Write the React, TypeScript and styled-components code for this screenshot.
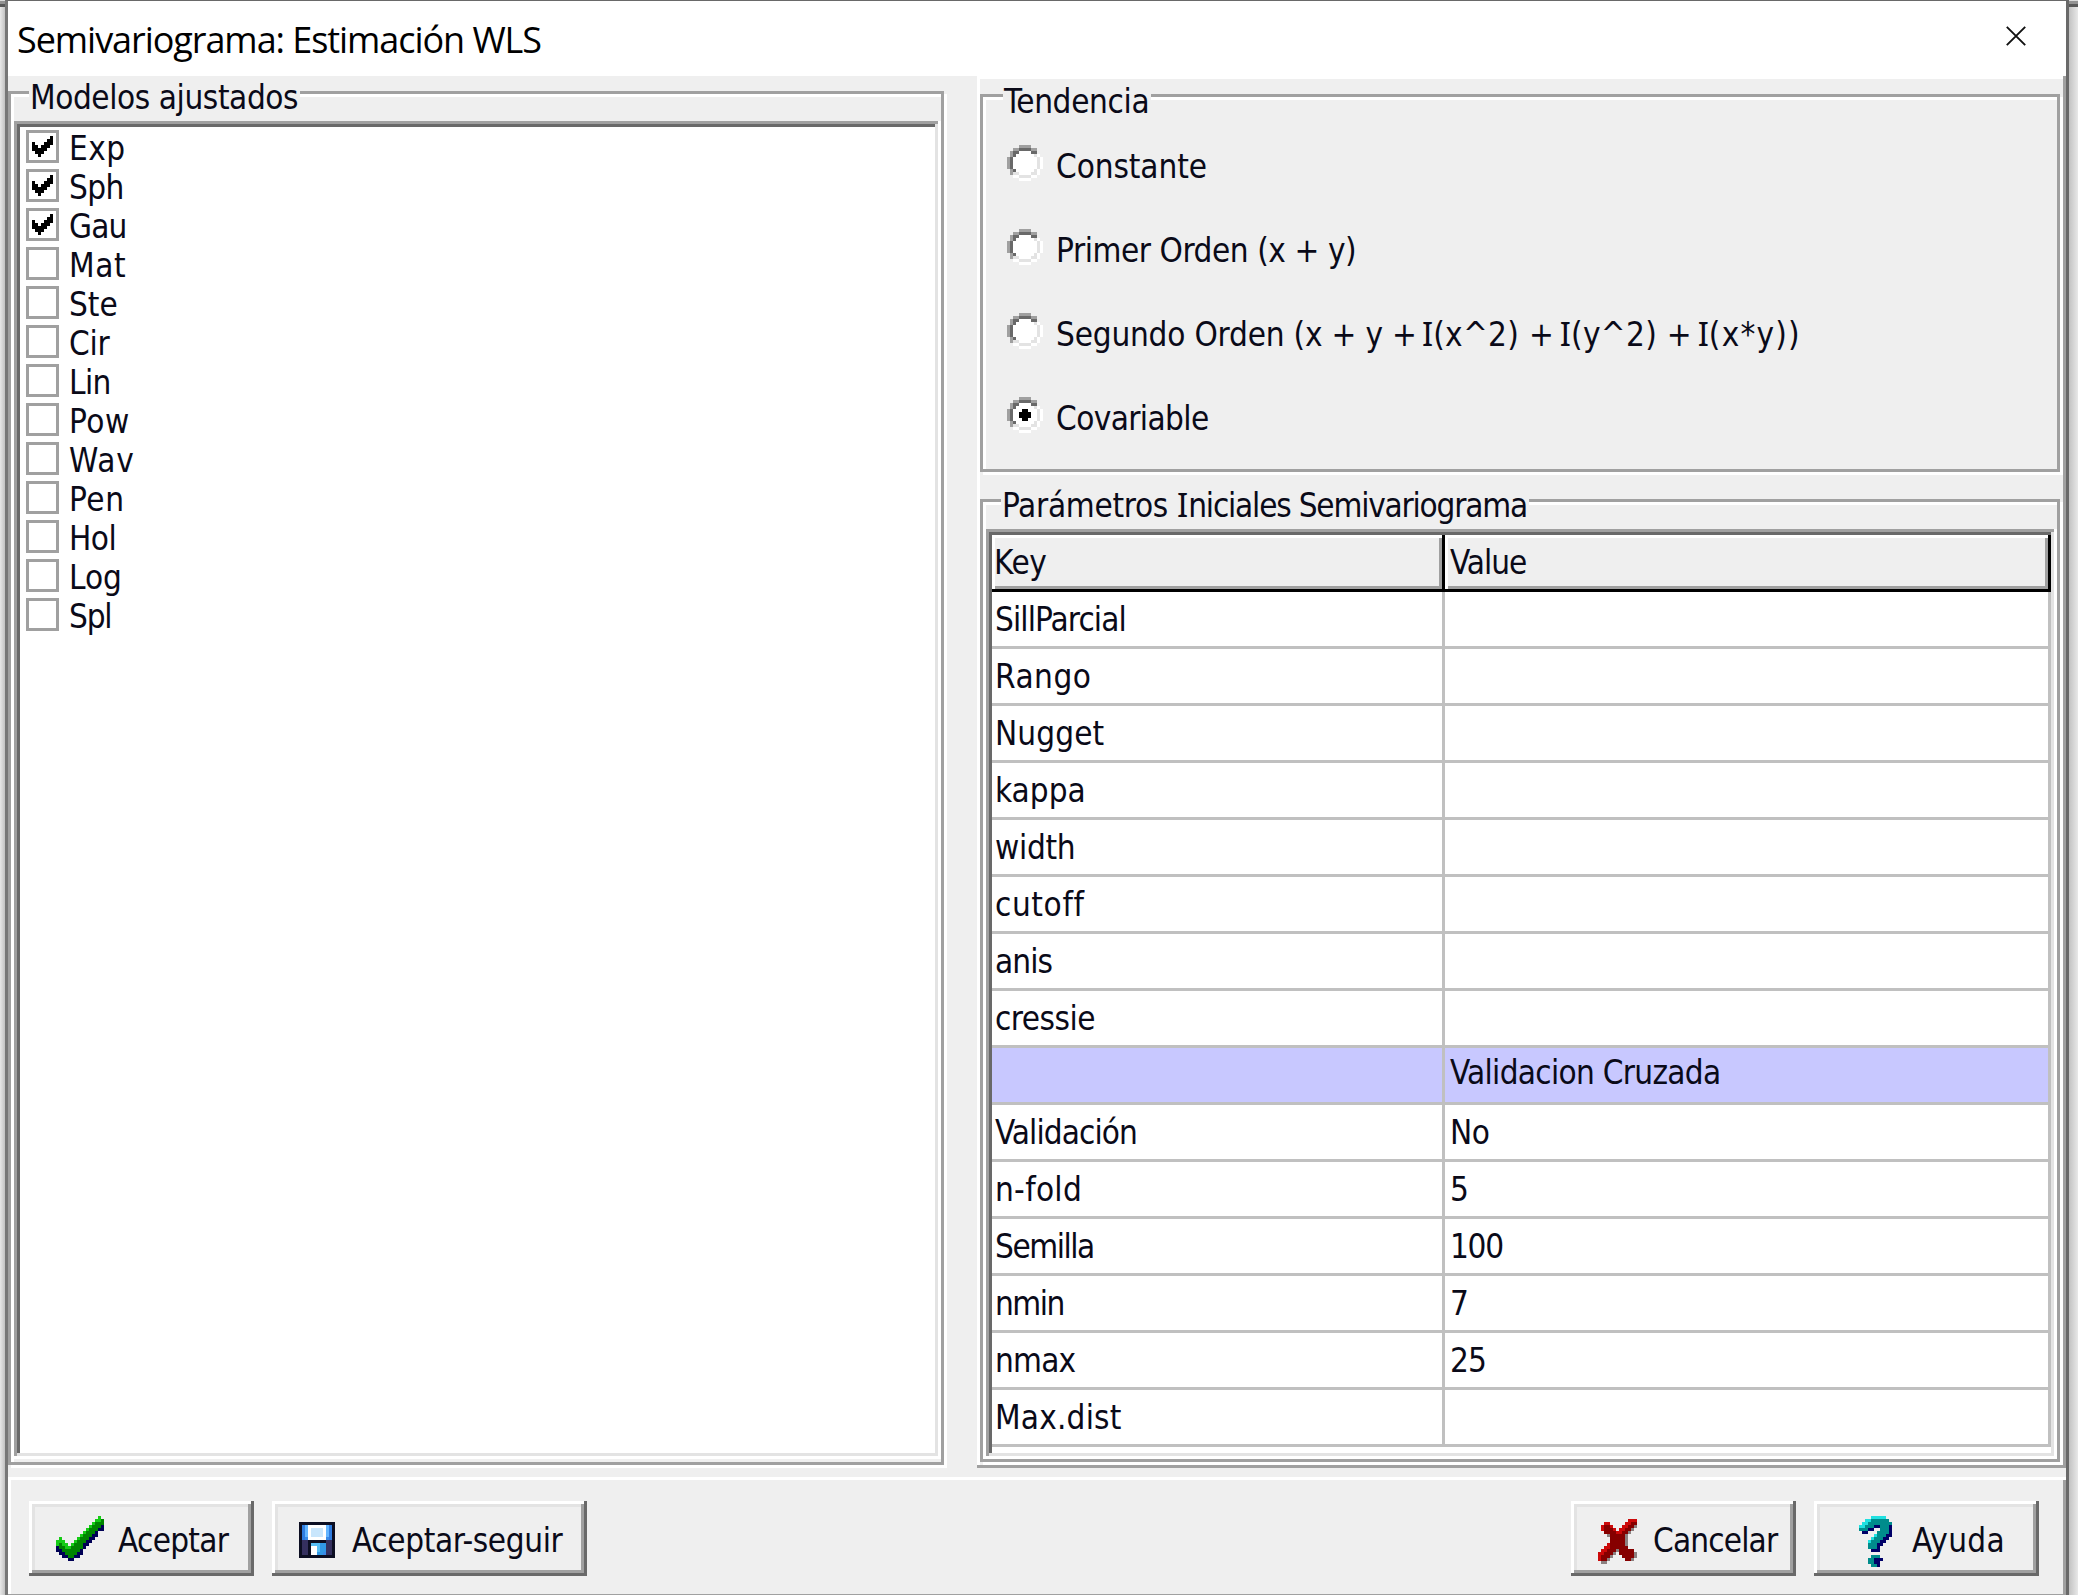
import React, { useState } from "react";
import styled, { createGlobalStyle, css } from "styled-components";

const face = "#efefef";
const light = "#ffffff";
const soft = "#e3e3e3";
const shadow = "#a0a0a0";
const dark = "#696969";
const line = "#c0c0c0";

const GlobalStyle = createGlobalStyle`
  * { box-sizing: border-box; }
  body { margin: 0; background: #e6e6e6; }
`;

const Desktop = styled.div`
  display: flex;
  width: 2078px;
  height: 1595px;
  overflow: hidden;
  font-family: "DejaVu Sans Condensed", "DejaVu Sans", sans-serif;
  font-size: 33px;
  color: #0a0a18;
`;

const Edge = styled.div<{ $side: "left" | "right" }>`
  flex: none;
  width: ${(p) => (p.$side === "left" ? 5 : 9)}px;
  background: linear-gradient(to ${(p) => p.$side}, #c2c2c2, #e8e8e8);
  &::before {
    content: "";
    display: block;
    height: 7px;
    background: linear-gradient(#dcdcdc 1px, #929292 1px, #929292 4px, #585858 4px);
  }
`;

const Window = styled.section`
  flex: none;
  display: flex;
  flex-direction: column;
  width: 2064px;
  height: 1595px;
  border: solid ${dark};
  border-width: 1px 3px 0 3px;
  border-left-color: #777;
  background: ${face};
`;

const TitleBar = styled.header`
  flex: none;
  display: flex;
  justify-content: space-between;
  height: 75px;
  padding: 0 40px 0 9px;
  background: ${light};
  color: #000;
`;

const Title = styled.h1`
  margin: 0;
  font: 400 36px/77px "Open Sans", "Noto Sans", sans-serif;
  letter-spacing: -1.06px;
  white-space: nowrap;
`;

const CloseButton = styled.button`
  display: block;
  width: 20px;
  height: 20px;
  margin-top: 25px;
  padding: 0;
  border: 0;
  background: none;
  svg { display: block; }
`;

const Body = styled.main`
  flex: none;
  display: flex;
  height: 1401px;
`;

const LeftColumn = styled.div`
  display: flex;
  width: 936px;
  height: 1374px;
  margin-top: 15px;
`;

const RightColumn = styled.div`
  display: flex;
  flex-direction: column;
  gap: 27px;
  width: 1089px;
  height: 1392px;
  margin-left: 33px;
  padding: 18px 6px 6px 3px;
  box-shadow: inset -3px -3px 0 ${shadow}, inset 3px 3px 0 ${light};
`;

const Group = styled.section<{ $height?: number }>`
  display: flex;
  flex-direction: column;
  flex: ${(p) => (p.$height ? `0 0 ${p.$height}px` : "1")};
  min-width: 0;
  padding: 0 0 3px 3px;
  border: 3px solid ${shadow};
  box-shadow: inset 3px 3px 0 ${light}, 3px 3px 0 ${light};
`;

const GroupTitle = styled.div<{ $left: number; $track: number; $top?: number }>`
  flex: none;
  align-self: flex-start;
  height: 36px;
  margin: ${(p) => p.$top ?? -15}px 0 6px ${(p) => p.$left}px;
  padding: 0 2px 0 1px;
  background: ${face};
  line-height: 37px;
  letter-spacing: ${(p) => p.$track}px;
  white-space: pre;
`;

const Sunken = styled.div<{ $bottom?: number }>`
  flex: 1;
  padding: 6px;
  margin-bottom: ${(p) => p.$bottom ?? 0}px;
  background: ${light};
  box-shadow: inset -3px -3px 0 ${light}, inset 3px 3px 0 ${shadow},
    inset -6px -6px 0 ${soft}, inset 6px 6px 0 ${dark};
`;

const Text = styled.span<{ $track: number }>`
  letter-spacing: ${(p) => p.$track}px;
  white-space: pre;
`;

const SerifI = styled.span<{ $tight?: boolean }>`
  margin-left: ${(p) => (p.$tight ? -4 : 0)}px;
  font-family: "Noto Sans", sans-serif;
  letter-spacing: 0;
  line-height: 1;
`;

const CheckRow = styled.label`
  display: flex;
  align-items: flex-start;
  gap: 10px;
  height: 39px;
  padding: 3px 0 0 6px;
  line-height: 38px;
`;

const CheckBox = styled.span`
  flex: none;
  width: 33px;
  height: 33px;
  padding: 3px;
  border: 3px solid ${shadow};
  background: ${light};
  svg { display: block; }
`;

const RadioList = styled.div`
  display: flex;
  flex-direction: column;
  gap: 48px;
  padding: 20px 0 0 21px;
`;

const RadioRow = styled.label`
  display: flex;
  align-items: flex-start;
  gap: 13px;
  height: 36px;
  line-height: 43px;
  svg { flex: none; }
`;

const Grid = styled.div`
  display: grid;
  grid-template-columns: 453px 606px;
  grid-auto-rows: 57px;
`;

const HeaderCell = styled.div<{ $left: number }>`
  padding-left: ${(p) => p.$left}px;
  border: solid #000;
  border-width: 0 3px 3px 0;
  background: ${face};
  box-shadow: inset 3px 3px 0 ${light}, inset -3px -3px 0 ${shadow};
  line-height: 55px;
`;

const Cell = styled.div<{ $left: number; $section?: boolean }>`
  padding-left: ${(p) => p.$left}px;
  border: solid ${line};
  border-width: 0 3px 3px 0;
  line-height: 55px;
  ${(p) => p.$section && css`
    background: #c8c8ff;
    line-height: 49px;
  `}
`;

const Footer = styled.footer`
  flex: none;
  display: flex;
  gap: 18px;
  width: 2058px;
  height: 118px;
  padding: 24px 27px 0 21px;
  border-bottom: 1px solid ${shadow};
  box-shadow: inset 3px 3px 0 ${light}, inset -3px 0 0 ${shadow};
`;

const Spacer = styled.div`
  flex: 1;
`;

const Button = styled.button<{ $width: number; $pad: number; $gap: number }>`
  display: flex;
  align-items: flex-start;
  gap: ${(p) => p.$gap}px;
  width: ${(p) => p.$width}px;
  height: 75px;
  padding: 0 0 0 ${(p) => p.$pad}px;
  border: 0;
  background: ${face};
  box-shadow: inset -3px -3px 0 ${dark}, inset 3px 3px 0 ${light},
    inset -6px -6px 0 ${shadow}, inset 6px 6px 0 ${soft};
  color: inherit;
  font: inherit;
  line-height: 80px;
`;

const IconBox = styled.span<{ $top: number }>`
  flex: none;
  padding-top: ${(p) => p.$top}px;
  svg { display: block; }
`;

type Palette = Record<string, string>;

function Pixels({ rows, palette }: { rows: string[]; palette: Palette }) {
  const cols = Math.max(...rows.map((r) => r.length));
  return (
    <svg width={cols * 3} height={rows.length * 3} viewBox={`0 0 ${cols} ${rows.length}`} shapeRendering="crispEdges">
      {rows.flatMap((row, y) =>
        [...row].map((ch, x) =>
          palette[ch] ? <rect key={`${x}-${y}`} x={x} y={y} width={1} height={1} fill={palette[ch]} /> : null
        )
      )}
    </svg>
  );
}

const tick = [
  "......#",
  ".....##",
  "#...###",
  "##.###.",
  "#####..",
  ".###...",
  "..#....",
];

const radioOff = [
  "....SSSS....",
  "..SSDDDDSS..",
  ".SDDWWWWDD..",
  ".SDWWWWWWLH.",
  "SDWWWWWWWWLH",
  "SDWWWWWWWWLH",
  "SDWWWWWWWWLH",
  "SDWWWWWWWWLH",
  ".SDWWWWWWLH.",
  ".SLLWWWWLLH.",
  "..HHLLLLHH..",
  "....HHHH....",
];

const radioOn = radioOff.map((row, y) => {
  if (y === 4 || y === 7) return row.slice(0, 5) + "##" + row.slice(7);
  if (y === 5 || y === 6) return row.slice(0, 4) + "####" + row.slice(8);
  return row;
});

const radioPalette: Palette = { S: shadow, D: dark, W: "#fff", L: soft, H: "#fff", "#": "#000" };

const okIcon = [
  "..............g.",
  ".............ggG",
  "............gGGG",
  "...........gGGGN",
  "..........gGGGNN",
  ".........gGGGN..",
  "........gGGGNN..",
  ".g.....gGGGNN...",
  "ggg...gGGGNN....",
  "gGgg.gGGGNN.....",
  "NGGggGGGGN......",
  "NNGGGGGGN.......",
  ".NNGGGGNN.......",
  "..NNGGNN........",
  "....NN..........",
];
const okPalette: Palette = { g: "#16cc16", G: "#008400", N: "#000055" };

const saveIcon = [
  "KKKKKKKKKKKK",
  "KBbWWWWWWbBK",
  "KBbWLLLLWbBK",
  "KBbWLLLLWbBK",
  "KBbWLLLLWbBK",
  "KBcWWWWWWcBK",
  "KPPKKKKKKPPK",
  "KPPKTTTUUPPK",
  "KPPKWWTUUPPK",
  "KPPKWWTUUPPK",
  "KPPKWWUUcPPK",
  "KKKKKKKKKKKK",
];
const savePalette: Palette = {
  K: "#0c0e22", B: "#2f7ce0", b: "#62b4ff", c: "#3a8ae8", W: "#ffffff",
  L: "#c9e6fc", P: "#35305f", T: "#55bdf5", U: "#3198e6",
};

const cancelIcon = [
  "..........rrr",
  "..rr.....rrRR",
  ".rRRr...rrRRs",
  ".rRRRr.rrRRs.",
  "..RRRRrrRRs..",
  "...sRRRRRs...",
  "....RRRRRs...",
  "....RRRRRs...",
  "...rRRRRRs...",
  "..rrRRRRRR...",
  ".rrRRRsRRRRR.",
  "rrRRRs.RRRRRs",
  "rRRRs...RRRRs",
  "rRRs.....RRs.",
  ".ss..........",
];
const cancelPalette: Palette = { r: "#cc0a0a", R: "#860000", s: "#8c8080" };

const helpIcon = [
  "....ccccc..",
  "..ccTTTTTT.",
  ".ccTTTTTTTT",
  "ccTTTNNTTTN",
  "TTTNN..TTTN",
  ".NN...TTTTN",
  ".....cTTTNN",
  "....cTTTNN.",
  "...cTTTNN..",
  "...TTTNN...",
  "...TTTN....",
  "....NNN....",
  "...........",
  "....TTT....",
  "...TTNNN...",
  "...TTNN....",
  "....TTN....",
];
const helpPalette: Palette = { c: "#20e0e0", T: "#008c8c", N: "#000068" };

const models: [string, number][] = [
  ["Exp", 0.5], ["Sph", -0.6], ["Gau", -0.85], ["Mat", 0.6], ["Ste", 0],
  ["Cir", -0.3], ["Lin", -0.6], ["Pow", 0.56], ["Wav", 0.9], ["Pen", 0.6],
  ["Hol", -0.5], ["Log", -0.06], ["Spl", -1.2],
];

type Param = { name: string; track: number; value?: string; valueTrack?: number; section?: boolean };
const params: Param[] = [
  { name: "SillParcial", track: -0.9 },
  { name: "Rango", track: 0.5 },
  { name: "Nugget", track: 0.1 },
  { name: "kappa", track: 0 },
  { name: "width", track: -0.3 },
  { name: "cutoff", track: 0.61 },
  { name: "anis", track: -0.9 },
  { name: "cressie", track: -0.5 },
  { name: "", track: 0, value: "Validacion Cruzada", valueTrack: -0.7, section: true },
  { name: "Validación", track: -0.91, value: "No", valueTrack: -0.5 },
  { name: "n-fold", track: 0.3 },
  { name: "Semilla", track: -1.47, value: "100", valueTrack: -1.3 },
  { name: "nmin", track: -1.5, value: "7" },
  { name: "nmax", track: -0.8, value: "25", valueTrack: -1 },
  { name: "Max.dist", track: 0.2 },
];
params[10].value = "5";

const trends: React.ReactNode[] = [
  <Text $track={-0.1}>Constante</Text>,
  <Text $track={-0.44}>Primer Orden (x + y)</Text>,
  <Text $track={-0.2}>
    {"Segundo Orden (x + y + "}
    <SerifI $tight>I</SerifI>
    <Text $track={0.3}>{"(x^2) + "}</Text>
    <SerifI $tight>I</SerifI>
    <Text $track={0.3}>{"(y^2) + "}</Text>
    <SerifI $tight>I</SerifI>
    <Text $track={1.2}>(x*y))</Text>
  </Text>,
  <Text $track={-0.6}>Covariable</Text>,
];

export default function App() {
  const [checked, setChecked] = useState<string[]>(["Exp", "Sph", "Gau"]);
  const [trend, setTrend] = useState(3);
  const toggle = (name: string) =>
    setChecked((list) => (list.includes(name) ? list.filter((n) => n !== name) : [...list, name]));

  return (
    <Desktop>
      <GlobalStyle />
      <Edge $side="left" />
      <Window>
        <TitleBar>
          <Title>Semivariograma: Estimación WLS</Title>
          <CloseButton aria-label="Cerrar">
            <svg width="20" height="20" viewBox="0 0 20 20" fill="none" stroke="#111" strokeWidth="1.9">
              <path d="M0.8 0.8 19.2 19.2M19.2 0.8 0.8 19.2" />
            </svg>
          </CloseButton>
        </TitleBar>

        <Body>
          <LeftColumn>
            <Group>
              <GroupTitle $left={15} $track={-0.42}>Modelos ajustados</GroupTitle>
              <Sunken>
                {models.map(([name, track]) => (
                  <CheckRow key={name} onClick={() => toggle(name)}>
                    <CheckBox>
                      {checked.includes(name) && <Pixels rows={tick} palette={{ "#": "#000" }} />}
                    </CheckBox>
                    <Text $track={track}>{name}</Text>
                  </CheckRow>
                ))}
              </Sunken>
            </Group>
          </LeftColumn>

          <RightColumn>
            <Group $height={378}>
              <GroupTitle $left={17} $track={-0.33} $top={-14}>Tendencia</GroupTitle>
              <RadioList>
                {trends.map((label, i) => (
                  <RadioRow key={i} onClick={() => setTrend(i)}>
                    <Pixels rows={trend === i ? radioOn : radioOff} palette={radioPalette} />
                    {label}
                  </RadioRow>
                ))}
              </RadioList>
            </Group>

            <Group>
              <GroupTitle $left={15} $track={-0.3}>
                {"Parámetros "}
                <SerifI>I</SerifI>
                <Text $track={-1.2}>niciales Semivariograma</Text>
              </GroupTitle>
              <Sunken $bottom={-3}>
                <Grid>
                  <HeaderCell $left={2}><Text $track={-0.4}>Key</Text></HeaderCell>
                  <HeaderCell $left={5}><Text $track={-1}>Value</Text></HeaderCell>
                  {params.map((p, i) => (
                    <React.Fragment key={i}>
                      <Cell $left={3} $section={p.section}><Text $track={p.track}>{p.name}</Text></Cell>
                      <Cell $left={5} $section={p.section}>
                        <Text $track={p.valueTrack ?? 0}>{p.value}</Text>
                      </Cell>
                    </React.Fragment>
                  ))}
                </Grid>
              </Sunken>
            </Group>
          </RightColumn>
        </Body>

        <Footer>
          <Button $width={225} $pad={27} $gap={14}>
            <IconBox $top={15}><Pixels rows={okIcon} palette={okPalette} /></IconBox>
            <Text $track={-0.7}>Aceptar</Text>
          </Button>
          <Button $width={315} $pad={27} $gap={17}>
            <IconBox $top={21}><Pixels rows={saveIcon} palette={savePalette} /></IconBox>
            <Text $track={-0.38}>Aceptar-seguir</Text>
          </Button>
          <Spacer />
          <Button $width={225} $pad={27} $gap={16}>
            <IconBox $top={18}><Pixels rows={cancelIcon} palette={cancelPalette} /></IconBox>
            <Text $track={-0.83}>Cancelar</Text>
          </Button>
          <Button $width={225} $pad={45} $gap={20}>
            <IconBox $top={15}><Pixels rows={helpIcon} palette={helpPalette} /></IconBox>
            <Text $track={0.3}>Ayuda</Text>
          </Button>
        </Footer>
      </Window>
      <Edge $side="right" />
    </Desktop>
  );
}
